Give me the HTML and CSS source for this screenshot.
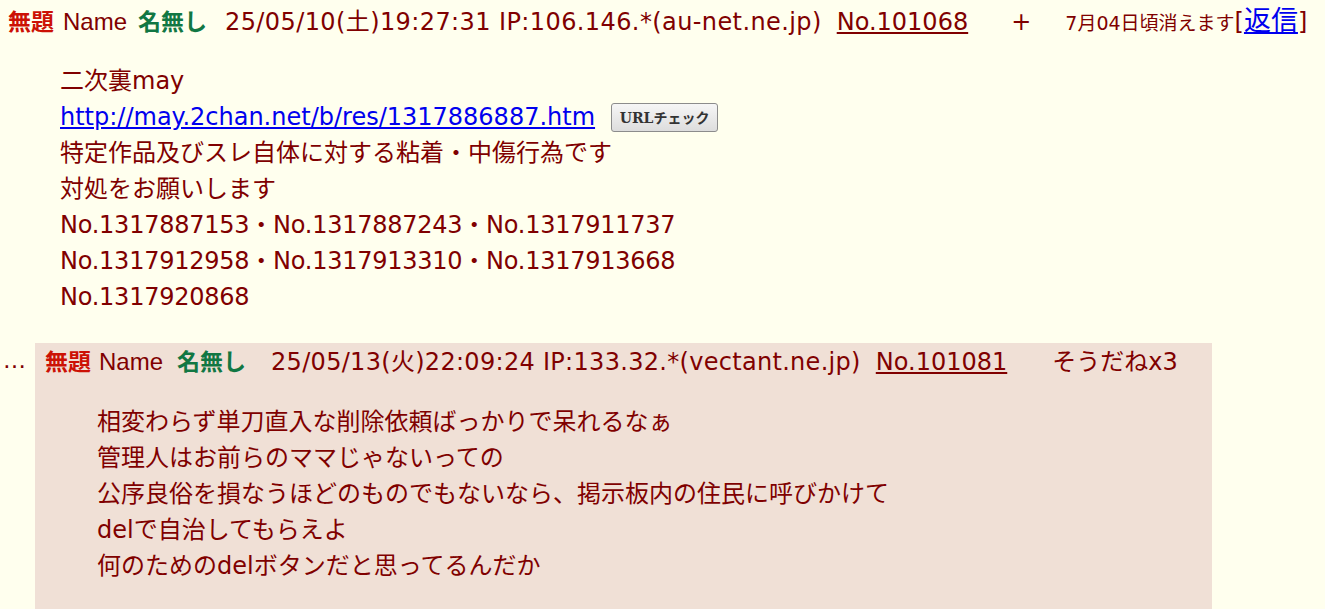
FILE: index.html
```html
<!DOCTYPE html>
<html lang="ja">
<head>
<meta charset="utf-8">
<link rel="stylesheet" href="styles.css">
</head>
<body>
<div class="thread">
  <div class="head ophead">
    <span class="subj">無題</span>
    <span class="lbl">Name</span>
    <span class="name">名無し</span>
    <span class="date">25/05/10(土)19:27:31 IP:106.146.*(au-net.ne.jp)</span>
    <a class="no">No.101068</a>
    <span class="plus">+</span>
    <span class="expire">7月04日頃消えます</span><span class="rep">[<a class="replink">返信</a>]</span>
  </div>
  <div class="body">
    <div>二次裏may</div>
    <div class="urlrow"><a class="url">http://may.2chan.net/b/res/1317886887.htm</a><button class="chk">URLチェック</button></div>
    <div>特定作品及びスレ自体に対する粘着・中傷行為です</div>
    <div>対処をお願いします</div>
    <div class="nums">No.1317887153・No.1317887243・No.1317911737</div>
    <div class="nums">No.1317912958・No.1317913310・No.1317913668</div>
    <div class="nums">No.1317920868</div>
  </div>
</div>
<div class="reply">
  <div class="dots">…</div>
  <div class="rbox">
    <div class="head rhead">
      <span class="subj">無題</span>
      <span class="lbl rlbl">Name</span>
      <span class="name rname">名無し</span>
      <span class="date rdate">25/05/13(火)22:09:24 IP:133.32.*(vectant.ne.jp)</span>
      <a class="no">No.101081</a>
      <span class="sod">そうだねx3</span>
    </div>
    <div class="rbody">
      <div>相変わらず単刀直入な削除依頼ばっかりで呆れるなぁ</div>
      <div>管理人はお前らのママじゃないっての</div>
      <div>公序良俗を損なうほどのものでもないなら、掲示板内の住民に呼びかけて</div>
      <div>delで自治してもらえよ</div>
      <div>何のためのdelボタンだと思ってるんだか</div>
    </div>
  </div>
</div>
</body>
</html>
```

FILE: styles.css
```css
html, body {
  margin: 0;
  padding: 0;
}
body {
  background: #ffffee;
  color: #800000;
  font-family: "DejaVu Sans", "Noto Sans CJK JP", sans-serif;
  font-size: 24px;
  overflow: hidden;
  height: 609px;
}
.thread {
  padding: 0 0 0 8px;
}
.head {
  display: flex;
  align-items: baseline;
  white-space: nowrap;
}
.ophead {
  height: 38px;
  line-height: 38px;
}
.subj {
  color: #cc1105;
  font-weight: bold;
  font-family: "Noto Sans CJK JP", sans-serif;
  font-size: 23px;
}
.lbl {
  margin-left: 9px;
  font-family: "Liberation Sans", sans-serif;
}
.name {
  color: #117743;
  font-weight: bold;
  margin-left: 11px;
  font-family: "Noto Sans CJK JP", sans-serif;
  font-size: 23px;
}
.date {
  margin-left: 18px;
  letter-spacing: 0.4px;
}
.no {
  margin-left: 15px;
  text-decoration: underline;
  color: #800000;
}
.plus {
  margin-left: 43px;
}
.expire {
  margin-left: 34px;
  font-size: 19px;
}
.rep {
  font-size: 24px;
}
.replink {
  color: #0000ee;
  text-decoration: underline;
  font-size: 27px;
  font-family: "Noto Sans CJK JP", sans-serif;
}
.body {
  margin: 25px 0 0 52px;
  line-height: 36px;
}
.nums {
  letter-spacing: -0.25px;
}
.urlrow {
  display: flex;
  align-items: center;
}
.url {
  color: #0000ee;
  text-decoration: underline;
}
.chk {
  margin-left: 16px;
  width: 107px;
  height: 29px;
  padding: 0;
  font-family: "DejaVu Serif", "Noto Sans CJK JP", serif;
  font-size: 14px;
  font-weight: bold;
  color: #333;
  border: 1px solid #8c8c8c;
  border-radius: 3px;
  background: linear-gradient(#f6f6f6, #dddddd);
}
.reply {
  display: flex;
  margin-top: 28px;
}
.dots {
  width: 35px;
  padding-left: 3px;
  box-sizing: border-box;
  line-height: 34px;
  font-size: 23px;
  color: #800000;
}
.rbox {
  width: 1177px;
  background: #f0e0d6;
  padding: 0 0 40px 10px;
  box-sizing: border-box;
}
.rhead {
  height: 34px;
  line-height: 34px;
}
.rlbl {
  margin-left: 8px;
}
.rname {
  margin-left: 14px;
}
.rdate {
  margin-left: 25px;
  letter-spacing: 0.3px;
}
.sod {
  margin-left: 45px;
}
.rbody {
  margin: 27px 0 0 52px;
  line-height: 36px;
}
```
